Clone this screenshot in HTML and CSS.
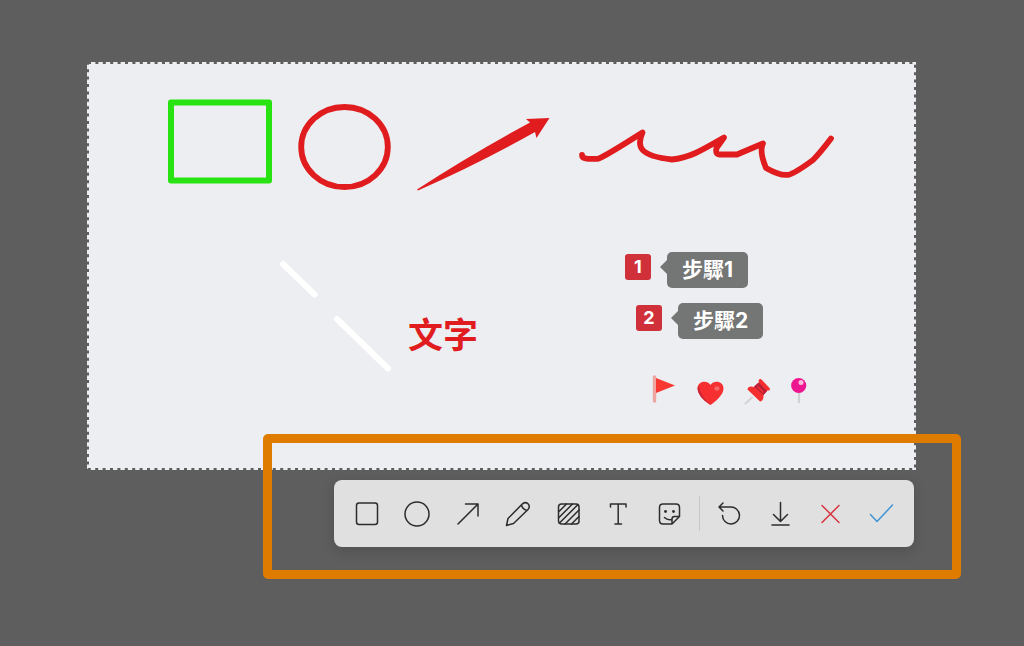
FILE: index.html
```html
<!DOCTYPE html>
<html lang="zh-Hant">
<head>
  <meta charset="UTF-8" />
  <meta name="viewport" content="width=device-width, initial-scale=1.0"/>
  <title>Screenshot Toolbar</title>
  <link rel="stylesheet" href="styles.css">
</head>
<body>
  <main class="screen">
    <div class="selection">
      <svg class="drawing" viewBox="87 62 829 408" aria-hidden="true">
        <!-- shapes -->
        <rect x="171" y="102.500" width="98" height="78" fill="none" stroke="#28e312" stroke-width="6" stroke-linejoin="round"/>
        <ellipse cx="344.5" cy="147" rx="43.3" ry="40" fill="none" stroke="#e01c1e" stroke-width="5.8"/>
        <path d="M417 189.5 Q470 155 530 122.5 L526 119 L549.5 118 L536.5 138 L535 132 Q480 163 418 190.5 Z" fill="#e01c1e"/>
        <path d="M582 155 Q582 158.5 588 158.8 H598 Q604 157 642.500 132.500 C636 147 640 156 672 159.500 C690 158 704 149 724 137.500 L716.500 148 Q715 154.500 720 154.500 H737 L763 143.500 Q759 151 766 168 Q780 176 788 174.800 Q794 174 813 160 Q820 153 831 138.500" fill="none" stroke="#e01c1e" stroke-width="5.8" stroke-linecap="round" stroke-linejoin="round"/>
        <path d="M283 264 L314.500 294.500 M337 319 L388 368.500" stroke="#fff" stroke-width="6" stroke-linecap="round"/>

        <!-- flag -->
        <path d="M654.500 377 V401" stroke="#efa5a0" stroke-width="3.400" stroke-linecap="round"/>
        <path d="M656 378 L675 385.500 L656 393 Z" fill="#f93832"/>
        <!-- heart -->
        <path d="M710.500 405 C706 402 697.500 395 697.500 388.500 C697.500 381 707 379.500 710.500 385 C714 379.500 723.500 381 723.500 388.500 C723.500 395 715 402 710.500 405 Z" fill="#f62f31"/>
        <path d="M699 386 Q700 396 710.500 405 Q697.500 397 697.500 388 Z" fill="#cc2437"/>
        <ellipse cx="717" cy="388.500" rx="2.600" ry="2.200" fill="#f5696a"/>
        <!-- pushpin -->
        <path d="M752 397.500 L745.500 403.500" stroke="#d5d5d8" stroke-width="2.200" stroke-linecap="round"/>
        <path d="M758.500 380.500 Q760 378 762 380 L769.500 388 Q771 391 767.500 390.500 L763.500 395 Q764 400.500 760 401.500 L747.500 389.500 Q748 385.500 754 387 L759 382.500 Z" fill="#f3302f"/>
        <path d="M758.500 382.500 L767 391 L763.500 395 L754 386.500 Z" fill="#b91f38"/>
        <path d="M757.500 386.500 L763.500 392.500" stroke="#f3302f" stroke-width="1.600"/>
        <!-- round pin -->
        <path d="M799 392 V403" stroke="#cfd1d3" stroke-width="2.200"/>
        <circle cx="798.700" cy="385.500" r="7.600" fill="#ee1690"/>
        <circle cx="801" cy="382.500" r="2.500" fill="#fbb9dc"/>

        <!-- dashed edge -->
        <rect class="edge" x="88" y="63" width="827" height="406"/>
      </svg>
      <span class="note">文字</span>
      <div class="step step-one">
        <span class="badge">1</span>
        <span class="bubble">步驟1</span>
      </div>
      <div class="step step-two">
        <span class="badge">2</span>
        <span class="bubble">步驟2</span>
      </div>
    </div>

    <div class="toolbar-area">
      <div class="toolbar" role="toolbar" aria-label="Annotation tools">
        <button type="button" aria-label="Rectangle">
          <svg viewBox="0 0 28 28"><rect x="3.500" y="3" width="21" height="21.500" rx="2.500"/></svg>
        </button>
        <button type="button" aria-label="Ellipse">
          <svg viewBox="0 0 28 28"><circle cx="14" cy="14" r="12"/></svg>
        </button>
        <button type="button" aria-label="Arrow">
          <svg viewBox="0 0 28 28"><path d="M4 24 L24 4 M11.500 4 H24 V16"/></svg>
        </button>
        <button type="button" aria-label="Pencil">
          <svg viewBox="0 0 28 28"><path d="M2.500 25.500 L4 18.500 L18.500 3.800 Q21.500 1.500 24 3.800 Q26.500 6.500 24 9.500 L9.500 23.500 Z M17.500 5 Q18.500 9.500 23 10.500"/></svg>
        </button>
        <button type="button" aria-label="Mosaic">
          <svg viewBox="0 0 28 28"><rect x="3.500" y="4" width="20.500" height="20" rx="3"/><path d="M4 11.500 L11.500 4 M4 17.500 L17.500 4 M4.500 23 L23 4.500 M10 24 L24 10 M16.500 24 L24 16.500"/></svg>
        </button>
        <button type="button" aria-label="Text">
          <svg viewBox="0 0 28 28"><path d="M5.500 7 V4 H21 V7 M13.200 4 V24 M10 24 H16.500"/></svg>
        </button>
        <button type="button" aria-label="Sticker">
          <svg viewBox="0 0 28 28"><path d="M16 24 H7 Q3.500 24 3.500 20.500 V7.500 Q3.500 4 7 4 H20 Q23.500 4 23.500 7.500 V16.500 L16 24 V19 Q16 16.500 18.500 16.500 H23.500 M8.500 17.500 Q11.500 20.500 15.500 19.500"/><circle class="dot" cx="9.500" cy="11.500" r="1.400"/><circle class="dot" cx="17.500" cy="11.500" r="1.400"/></svg>
        </button>
        <span class="separator"></span>
        <button type="button" aria-label="Undo">
          <svg viewBox="0 0 28 28"><path d="M8 3 L4 7 L8 11 M4 7 H15.500 A8.500 8.500 0 1 1 7.500 15.500"/></svg>
        </button>
        <button type="button" aria-label="Download">
          <svg viewBox="0 0 28 28"><path d="M14.500 2.500 V21 M7.500 14.500 L14.500 21.500 L21.500 14.500 M6 25 H23"/></svg>
        </button>
        <button type="button" class="cancel" aria-label="Cancel">
          <svg viewBox="0 0 28 28"><path d="M6 5.500 L23 22.500 M23 5.500 L6 22.500"/></svg>
        </button>
        <button type="button" class="confirm" aria-label="Confirm">
          <svg viewBox="0 0 28 28"><path d="M3.500 14.500 L10 21.500 L25.500 5"/></svg>
        </button>
      </div>
      <div class="highlight"></div>
    </div>
  </main>
</body>
</html>
```
FILE: styles.css
```css
* {
  box-sizing: border-box;
}
body {
  margin: 0;
  min-height: 100vh;
  font-family: Inter, "Noto Sans CJK TC", sans-serif;
  background-color: #5e5e5e;
}
.screen {
  padding: 62px 108px 0 87px;
}
.selection {
  position: relative;
  aspect-ratio: 829 / 408;
  background-color: #eceef1;
}
.drawing {
  display: block;
  width: 100%;
  height: 100%;
}
.edge {
  fill: none;
  stroke: #5e5e5e;
  stroke-width: 2;
  stroke-dasharray: 3 4.4;
}
.note {
  position: absolute;
  left: 321px;
  top: 251px;
  font-family: "Noto Sans CJK TC", sans-serif;
  font-size: 35px;
  line-height: 40px;
  font-weight: bold;
  color: #e01c1e;
}
.step {
  position: absolute;
  display: flex;
  align-items: flex-start;
  gap: 16px;
  color: white;
  font-weight: bold;
}
.step-one {
  left: 538px;
  top: 190px;
}
.step-two {
  left: 549px;
  top: 241px;
}
.badge {
  width: 26px;
  margin-top: 2px;
  border-radius: 3px;
  background-color: #d0303a;
  font-size: 18px;
  line-height: 26px;
  text-align: center;
}
.bubble {
  position: relative;
  padding: 0 15px;
  border-radius: 5px;
  background-color: #747575;
  font-size: 21px;
  line-height: 36px;
}
.bubble::before {
  content: "";
  position: absolute;
  left: -7px;
  top: 8px;
  border: 7px solid transparent;
  border-left: none;
  border-right-color: #747575;
}
.toolbar-area {
  position: relative;
  width: 70%;
  margin: 10px 2px 0 auto;
}
.toolbar {
  display: flex;
  align-items: center;
  justify-content: space-between;
  height: 67px;
  padding: 0 8px;
  border-radius: 8px;
  background-color: #e0e0e0;
  box-shadow: 0 4px 14px rgba(0, 0, 0, 0.15);
}
.toolbar button {
  display: flex;
  align-items: center;
  justify-content: center;
  width: 50px;
  height: 50px;
  padding: 0;
  border: none;
  background: none;
  color: #2c2c2c;
  cursor: pointer;
}
.toolbar svg {
  width: 28px;
  height: 28px;
  fill: none;
  stroke: currentColor;
  stroke-width: 1.5;
  stroke-linecap: round;
  stroke-linejoin: round;
}
.toolbar .dot {
  fill: currentColor;
  stroke: none;
}
.toolbar .cancel {
  color: #d8343f;
}
.toolbar .confirm {
  color: #3f93d2;
}
.separator {
  width: 1px;
  height: 35px;
  margin: 0 4px;
  background-color: #c9c9c9;
}
.highlight {
  position: absolute;
  top: -46px;
  right: -47px;
  bottom: -32px;
  left: -71px;
  border: 9px solid #df7c00;
  border-radius: 5px;
  pointer-events: none;
}
```
